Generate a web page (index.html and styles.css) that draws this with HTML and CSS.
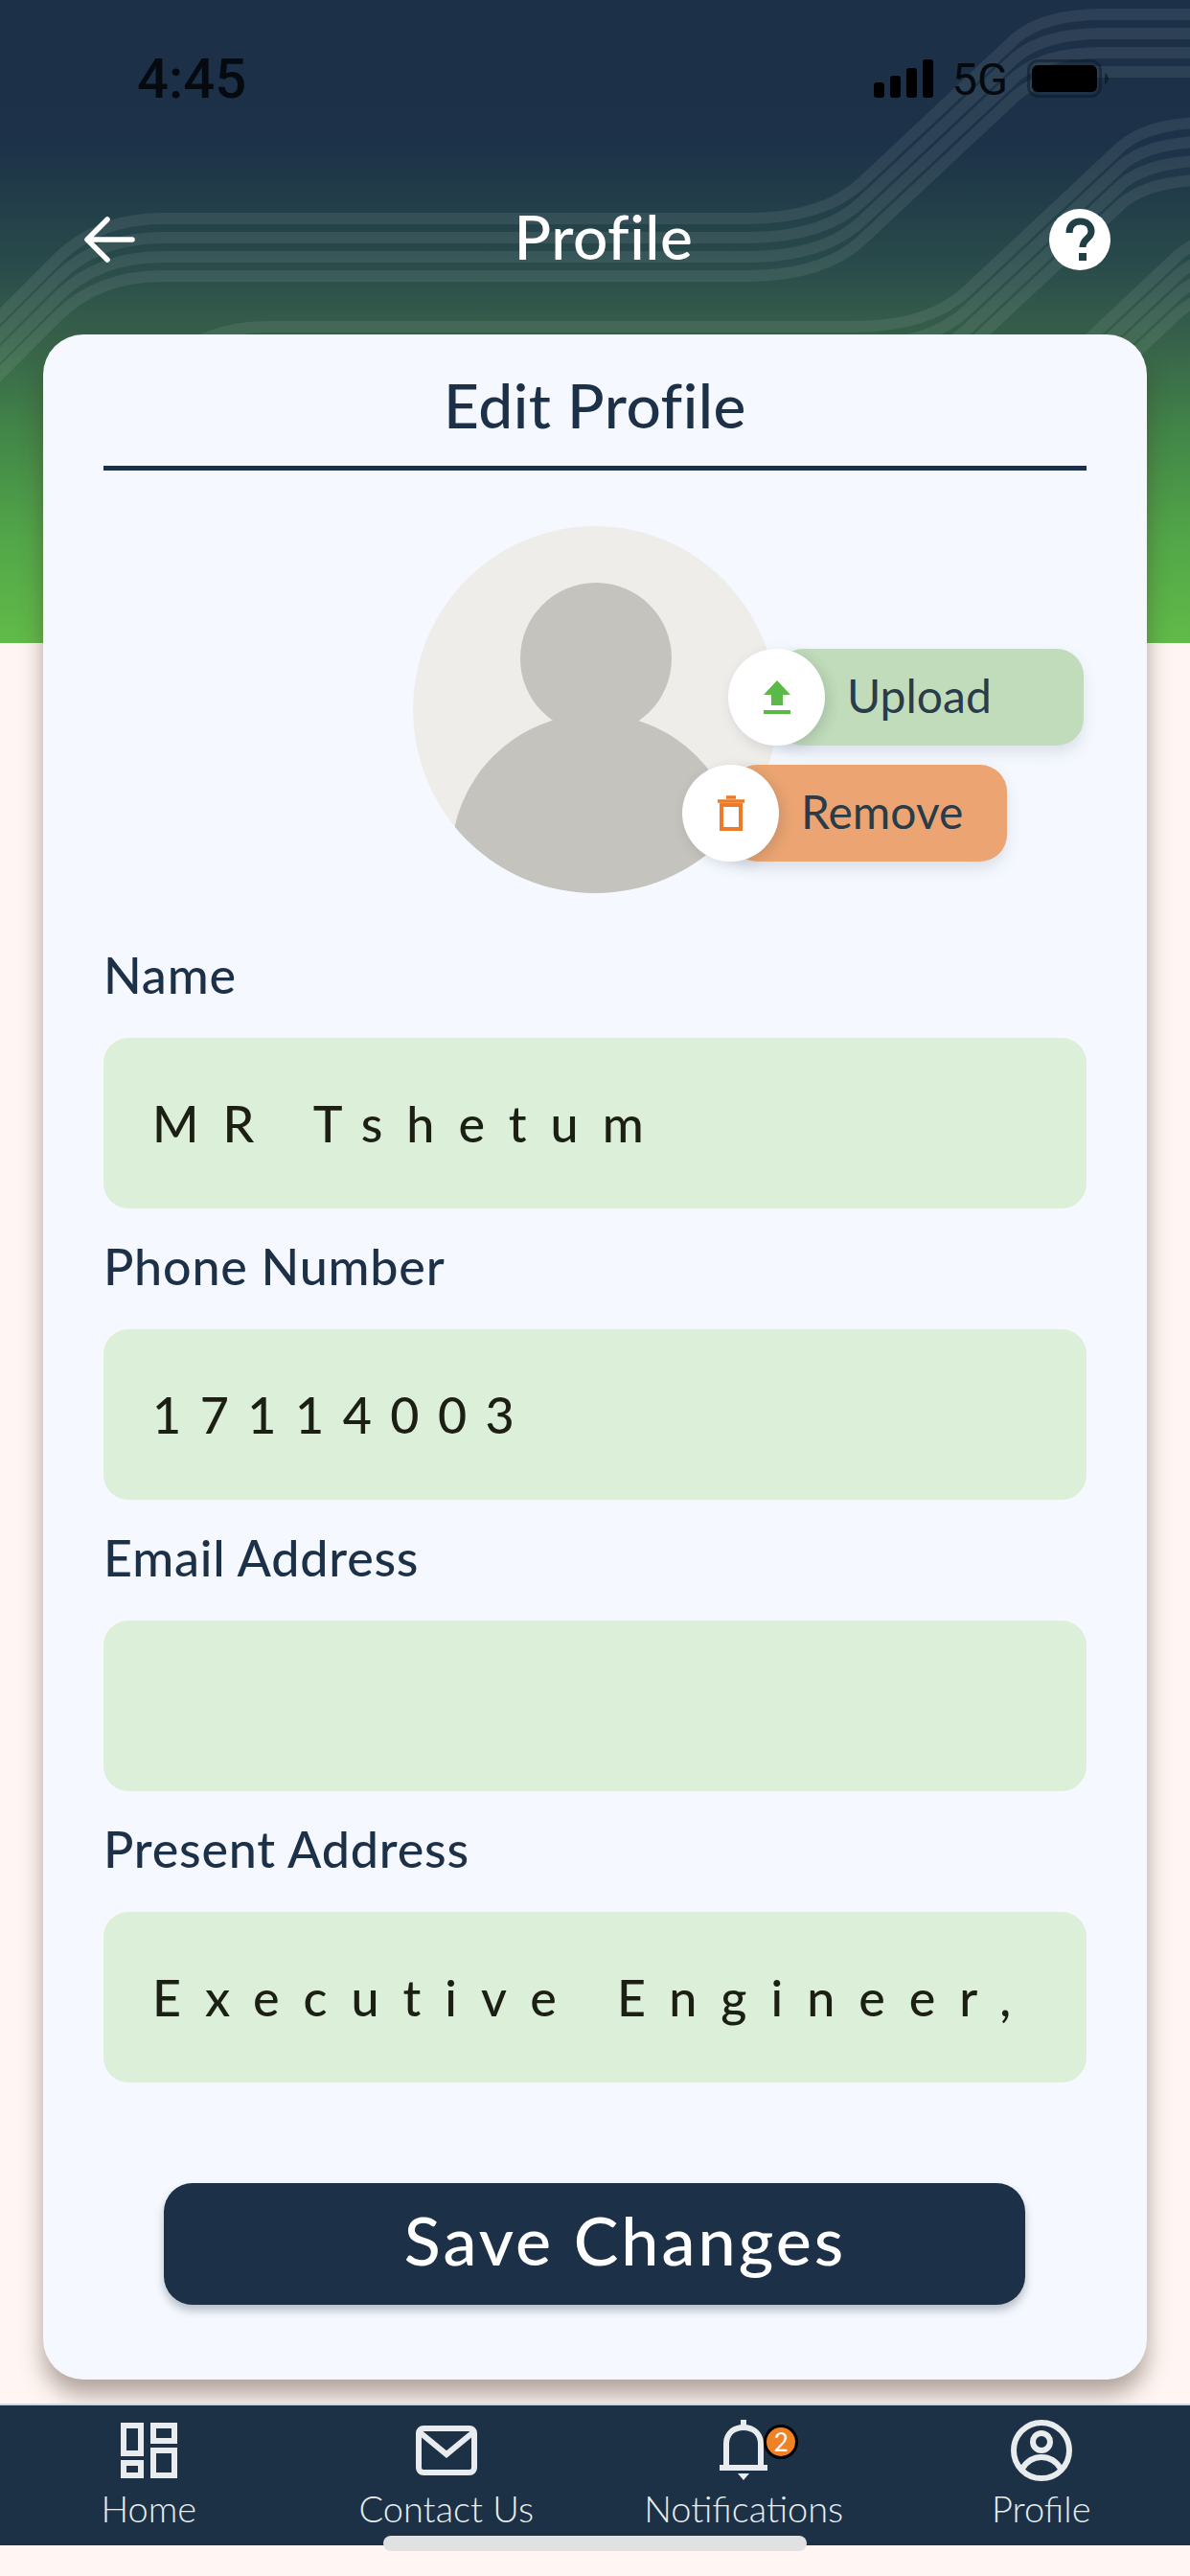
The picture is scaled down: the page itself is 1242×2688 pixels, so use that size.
FILE: index.html
```html
<!DOCTYPE html>
<html lang="en">
<head>
    <meta charset="UTF-8">
    <meta name="viewport" content="width=device-width, initial-scale=1.0">
    <title>Profile</title>
    <link rel="stylesheet" href="styles.css">
</head>
<body>

    <!-- Header background with wavy lines -->
    <div class="hero">
        <svg class="hero-lines" width="1242" height="671" viewBox="0 0 1242 671">
            <defs>
                <g id="wave">
                    <path d="M-60 390 L60 270 Q102 228 170 228 L780 228 Q860 228 900 190 L1060 40 Q1090 15 1150 15 L1300 15"/>
                    <path transform="translate(0 20)" d="M-60 390 L60 270 Q102 228 170 228 L780 228 Q860 228 900 190 L1060 40 Q1090 15 1150 15 L1300 15"/>
                    <path transform="translate(0 40)" d="M-60 390 L60 270 Q102 228 170 228 L780 228 Q860 228 900 190 L1060 40 Q1090 15 1150 15 L1300 15"/>
                    <path transform="translate(0 60)" d="M-60 390 L60 270 Q102 228 170 228 L780 228 Q860 228 900 190 L1060 40 Q1090 15 1150 15 L1300 15"/>
                </g>
            </defs>
            <use href="#wave"/>
            <use href="#wave" transform="translate(110 113)"/>
            <use href="#wave" transform="translate(170 226)"/>
        </svg>
    </div>

    <div class="statusbar">
        <span class="status-time">4:45</span>
        <div class="status-right">
            <svg width="62" height="40" viewBox="0 0 62 40">
                <rect x="0" y="24" width="11" height="16" rx="3"/>
                <rect x="17" y="17" width="11" height="23" rx="3"/>
                <rect x="34" y="9" width="11" height="31" rx="3"/>
                <rect x="51" y="0" width="11" height="40" rx="3"/>
            </svg>
            <span class="status-net">5G</span>
            <svg width="86" height="40" viewBox="0 0 86 40">
                <rect x="1.5" y="1.5" width="75" height="37" rx="10" fill="none" stroke="#0a1420" stroke-opacity="0.45" stroke-width="3"/>
                <rect x="5" y="6" width="68" height="28" rx="6"/>
                <path d="M81 14 Q85 16 85 20 Q85 24 81 26Z" fill="#0a1420" fill-opacity="0.6"/>
            </svg>
        </div>
    </div>

    <div class="topbar">
        <svg class="back-icon" width="54" height="50" viewBox="0 0 54 50" fill="none" stroke="#fff" stroke-width="5.5" stroke-linecap="round" stroke-linejoin="round">
            <path d="M50 25H4M24 4L3 25L24 46"/>
        </svg>
        <h1>Profile</h1>
        <svg class="help-icon" width="64" height="64" viewBox="0 0 64 64">
            <circle cx="32" cy="32" r="32" fill="#fff"/>
            <path d="M21 25 C21 17 26 13 32.500 13 C39 13 44 17 44 23.500 C44 31 35 31 35 40" fill="none" stroke="#1f3f45" stroke-width="7"/>
            <rect x="31" y="46" width="8" height="8" fill="#1f3f45"/>
        </svg>
    </div>

    <div class="card">
        <h2 class="card-title">Edit Profile</h2>

        <!-- Avatar with upload / remove buttons -->
        <div class="avatar-row">
            <div class="avatar">
                <svg width="380" height="383" viewBox="0 0 380 383">
                    <defs>
                        <clipPath id="avatar-clip"><ellipse cx="190" cy="191.500" rx="190" ry="191.500"/></clipPath>
                    </defs>
                    <ellipse cx="190" cy="191.500" rx="190" ry="191.500" fill="#efedea"/>
                    <g clip-path="url(#avatar-clip)" fill="#c5c3bd">
                        <circle cx="191" cy="138" r="79"/>
                        <circle cx="190" cy="346" r="150"/>
                    </g>
                </svg>
                <div class="pill pill-upload">
                    <span class="pill-icon">
                        <svg width="30" height="36" viewBox="0 0 30 36" fill="#5bb947">
                            <path d="M15 0L29 15H21V26H9V15H1Z"/>
                            <rect x="1" y="31" width="28" height="4"/>
                        </svg>
                    </span>
                    <span class="pill-text">Upload</span>
                </div>
                <div class="pill pill-remove">
                    <span class="pill-icon">
                        <svg width="30" height="38" viewBox="0 0 30 38" fill="none" stroke="#ec7a26" stroke-width="4">
                            <path d="M5 10H25V35H5Z"/>
                            <path d="M1 6H29M10 2H20" stroke-width="3.500"/>
                        </svg>
                    </span>
                    <span class="pill-text">Remove</span>
                </div>
            </div>
        </div>

        <label class="field-label">Name</label>
        <input class="field" type="text" value="MR Tshetum">

        <label class="field-label">Phone Number</label>
        <input class="field field-digits" type="text" value="17114003">

        <label class="field-label">Email Address</label>
        <input class="field" type="text" value="">

        <label class="field-label">Present Address</label>
        <input class="field" type="text" value="Executive Engineer,">

        <button class="save-btn">Save Changes</button>
    </div>

    <!-- Bottom navigation -->
    <nav class="bottom-nav">
        <div class="nav-item">
            <span class="nav-icon">
                <svg width="60" height="60" viewBox="0 0 60 60" fill="none" stroke="#e8ecef" stroke-width="6">
                    <rect x="4" y="4" width="18" height="29"/>
                    <rect x="35" y="4" width="22" height="16"/>
                    <rect x="35" y="30" width="22" height="26"/>
                    <rect x="4" y="43" width="18" height="13"/>
                </svg>
            </span>
            <span>Home</span>
        </div>
        <div class="nav-item">
            <span class="nav-icon">
                <svg width="66" height="54" viewBox="0 0 66 54" fill="none" stroke="#e8ecef" stroke-width="6" stroke-linejoin="round">
                    <rect x="4" y="4" width="58" height="46" rx="5"/>
                    <path d="M5 8L33 31L61 8" stroke-linejoin="miter"/>
                </svg>
            </span>
            <span>Contact Us</span>
        </div>
        <div class="nav-item">
            <span class="nav-icon">
                <svg width="54" height="64" viewBox="0 0 54 64" fill="none" stroke="#e8ecef" stroke-width="6">
                    <path d="M9 50V25C9 14 17 8 27 8C37 8 45 14 45 25V50"/>
                    <path d="M2 50H52" stroke-width="6"/>
                    <path d="M27 0V8" stroke-width="6" stroke-linecap="round"/>
                    <path d="M21 56H33L27 63Z" fill="#e8ecef" stroke="none"/>
                </svg>
                <span class="nav-badge">2</span>
            </span>
            <span>Notifications</span>
        </div>
        <div class="nav-item">
            <span class="nav-icon">
                <svg width="64" height="66" viewBox="0 0 64 66" fill="none" stroke="#e8ecef" stroke-width="6">
                    <circle cx="32" cy="33" r="29"/>
                    <circle cx="32" cy="24" r="9"/>
                    <path d="M12 52C18 42 25 40 32 40C39 40 46 42 52 52"/>
                </svg>
            </span>
            <span>Profile</span>
        </div>
        <div class="home-indicator"></div>
    </nav>

</body>
</html>
```

FILE: styles.css
```css
body {
    font-family: "Lato", sans-serif;
    background-color: #fff6f3;
    color: #1c3047;
    margin: 0;
    position: relative;
    width: 1242px;
    height: 2688px;
    overflow: hidden;
}

.hero {
    position: absolute;
    top: 0;
    left: 0;
    width: 100%;
    height: 671px;
    background: linear-gradient(to bottom, #1c3047 0, #1c3248 150px, #28494a 268px, #365f4a 348px, #418448 446px, #52a648 560px, #61bb49 671px);
}

.hero-lines {
    display: block;
    fill: none;
    stroke: #fff;
    stroke-opacity: 0.08;
    stroke-width: 12;
}

/* Status bar */
.statusbar {
    position: relative;
    height: 164px;
    display: flex;
    align-items: center;
    justify-content: space-between;
    padding: 0 84px 0 143px;
    color: #050a10;
}

.status-time {
    font-family: "Roboto", sans-serif;
    font-size: 58px;
    font-weight: 500;
}

.status-right {
    display: flex;
    align-items: center;
    gap: 20px;
}

.status-net {
    font-family: "Roboto", sans-serif;
    font-size: 47px;
}

/* Top bar */
.topbar {
    position: relative;
    height: 172px;
    margin-bottom: 13px;
    padding: 0 83px 0 88px;
    display: flex;
    align-items: center;
    justify-content: space-between;
}

.topbar h1 {
    margin: 0 0 8px 23px;
    font-size: 64px;
    font-weight: 500;
    letter-spacing: 0.5px;
    color: #fff;
}

/* Card */
.card {
    position: relative;
    width: 1152px;
    height: 2134px;
    box-sizing: border-box;
    margin: 0 0 25px 45px;
    padding: 38px 63px 0;
    background-color: #f5f9ff;
    border-radius: 42px;
    box-shadow: 0 16px 24px rgba(70, 50, 35, 0.42);
}

.card-title {
    margin: 0;
    padding-bottom: 27px;
    border-bottom: 5px solid #1c3047;
    font-size: 64px;
    line-height: 72px;
    font-weight: 500;
    letter-spacing: 0.5px;
    text-align: center;
}

.avatar-row {
    display: flex;
    justify-content: center;
    margin: 58px 0 55px;
}

.avatar {
    position: relative;
    width: 380px;
    height: 383px;
}

.avatar svg {
    display: block;
}

.pill {
    position: absolute;
    display: flex;
    align-items: center;
    height: 101px;
    border-radius: 28px;
    font-size: 48px;
    gap: 23px;
    color: #2a3c4a;
    box-shadow: 0 8px 16px rgba(40, 50, 70, 0.12);
}

.pill-text {
    padding-bottom: 5px;
}

.pill-upload {
    top: 128px;
    left: 379px;
    width: 321px;
    background-color: #c1dcba;
}

.pill-remove {
    top: 249px;
    left: 331px;
    width: 289px;
    background-color: #eca572;
}

.pill-icon {
    width: 101px;
    height: 101px;
    flex-shrink: 0;
    margin-left: -50px;
    border-radius: 50%;
    background-color: #fff;
    box-shadow: 4px 4px 14px rgba(40, 50, 70, 0.16);
    display: flex;
    align-items: center;
    justify-content: center;
}

.field-label {
    display: block;
    margin-bottom: 36px;
    font-size: 52px;
    line-height: 60px;
    font-weight: 500;
    letter-spacing: 0.8px;
}

.field {
    display: block;
    width: 100%;
    height: 178px;
    box-sizing: border-box;
    margin-bottom: 30px;
    padding: 0 51px;
    background-color: #dcefd8;
    border: none;
    border-radius: 26px;
    outline: none;
    font-family: inherit;
    font-size: 52px;
    font-weight: 500;
    letter-spacing: 25px;
    color: #1c1f14;
}

.field-digits {
    letter-spacing: 19.5px;
}

.save-btn {
    display: block;
    width: 899px;
    height: 127px;
    margin: 105px 0 0 63px;
    padding: 0 0 10px 64px;
    background-color: #1c3047;
    color: #fff;
    border: none;
    border-radius: 30px;
    box-shadow: 0 6px 10px rgba(40, 50, 70, 0.3);
    font-family: inherit;
    font-size: 70px;
    font-weight: 500;
    letter-spacing: 3px;
}

/* Bottom nav */
.bottom-nav {
    position: relative;
    height: 148px;
    display: grid;
    grid-template-columns: repeat(4, 1fr);
    background-color: #1c3145;
    border-top: 2px solid #cfd6de;
    box-sizing: border-box;
}

.nav-item {
    display: flex;
    flex-direction: column;
    align-items: center;
    padding-top: 12px;
    font-size: 38px;
    font-weight: 300;
    line-height: 42px;
    color: #e6ecf0;
}

.nav-icon {
    position: relative;
    height: 70px;
    margin-bottom: 4px;
    display: flex;
    align-items: center;
    justify-content: center;
}

.nav-badge {
    position: absolute;
    top: 8px;
    left: 48px;
    width: 30px;
    height: 30px;
    border: 3px solid #000;
    border-radius: 50%;
    background-color: #f08226;
    color: #fff;
    font-size: 26px;
    font-weight: 400;
    line-height: 30px;
    text-align: center;
}

.home-indicator {
    position: absolute;
    left: 400px;
    bottom: -6px;
    width: 442px;
    height: 16px;
    background-color: #e0e1e2;
    border-radius: 8px;
}
```
